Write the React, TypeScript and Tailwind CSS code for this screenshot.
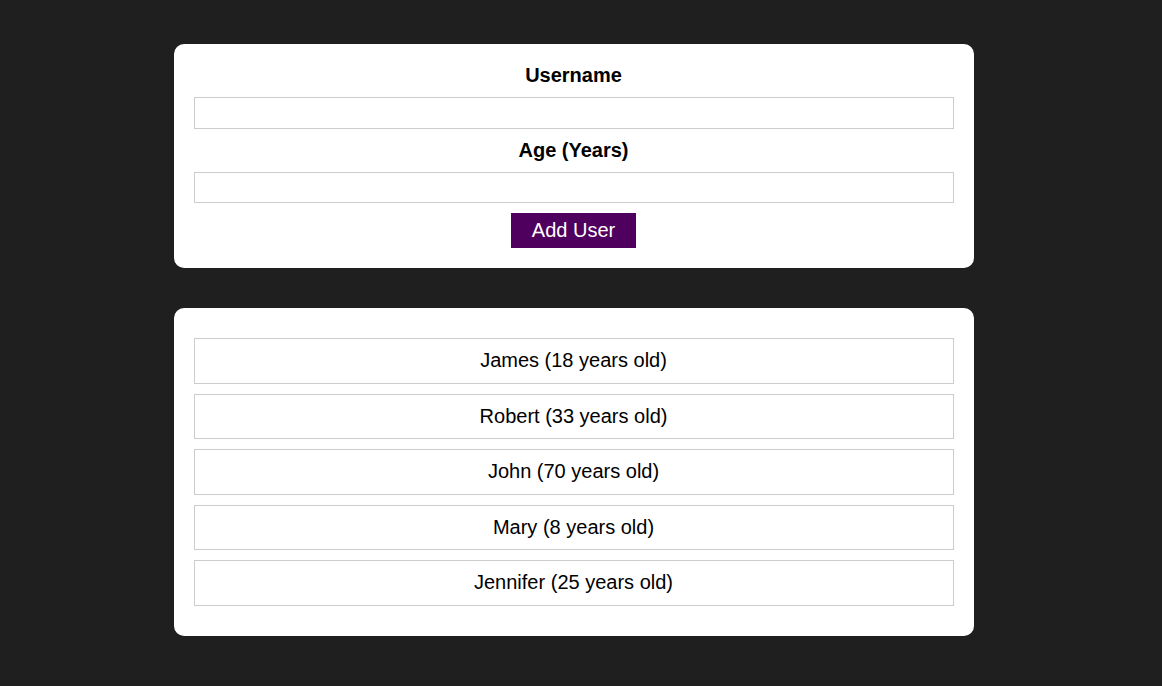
const users = [
  { id: "u1", name: "James", age: 18 },
  { id: "u2", name: "Robert", age: 33 },
  { id: "u3", name: "John", age: 70 },
  { id: "u4", name: "Mary", age: 8 },
  { id: "u5", name: "Jennifer", age: 25 },
];

function Card({ children, className = "" }: { children: React.ReactNode; className?: string }) {
  return <div className={`mx-auto w-[800px] rounded-[10px] bg-white ${className}`}>{children}</div>;
}

export default function App(): JSX.Element {
  return (
    <div className="min-h-[686px] bg-[#1f1f1f] pt-[44px] pb-10 font-['Liberation_Sans',Arial,sans-serif] text-[20px] leading-[23.5px] text-black">
      <div className="w-[1147px]">
        <Card className="p-5 leading-[23.25px]">
          <form onSubmit={(e) => e.preventDefault()}>
            <label htmlFor="username" className="mb-[10px] block text-center font-bold">
              Username
            </label>
            <input
              id="username"
              type="text"
              className="mb-[10px] block w-full border border-[#ccc] p-[3px] outline-none"
            />
            <label htmlFor="age" className="mb-[10px] block text-center font-bold">
              Age (Years)
            </label>
            <input
              id="age"
              type="number"
              className="mb-[10px] block w-full border border-[#ccc] p-[3px] outline-none"
            />
            <div className="flex justify-center">
              <button
                type="submit"
                className="border border-[#4f005f] bg-[#4f005f] px-5 py-[5px] text-white"
              >
                Add User
              </button>
            </div>
          </form>
        </Card>

        <Card className="mt-10">
          <ul className="p-5">
            {users.map((user) => (
              <li key={user.id} className="my-[10px] border border-[#ccc] p-[10px] text-center">
                {user.name} ({user.age} years old)
              </li>
            ))}
          </ul>
        </Card>
      </div>
    </div>
  );
}
